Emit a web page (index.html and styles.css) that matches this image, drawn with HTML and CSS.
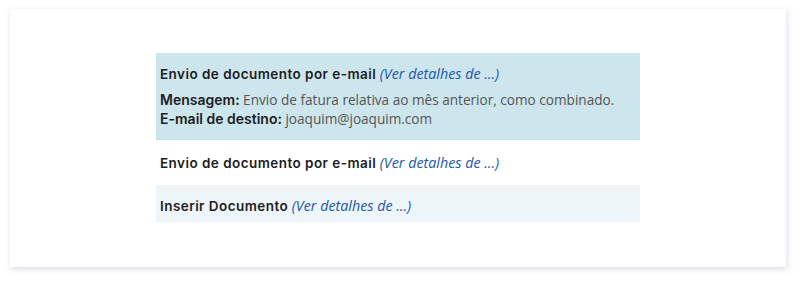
FILE: index.html
```html
<!DOCTYPE html>
<html lang="pt">
<head>
  <meta charset="UTF-8" />
  <title>Histórico de documentos</title>
  <link rel="stylesheet" href="styles.css">
</head>
<body>

  <div class="card">
    <ul class="history">
      <li class="entry entry-open">
        <div class="entry-title">
          <strong>Envio de documento por e-mail</strong>
          <a href="#">(Ver detalhes de ...)</a>
        </div>
        <div class="entry-details">
          <div><strong>Mensagem:</strong> Envio de fatura relativa ao mês anterior, como combinado.</div>
          <div><strong>E-mail de destino:</strong> joaquim@joaquim.com</div>
        </div>
      </li>
      <li class="entry entry-plain">
        <div class="entry-title">
          <strong>Envio de documento por e-mail</strong>
          <a href="#">(Ver detalhes de ...)</a>
        </div>
      </li>
      <li class="entry entry-alt">
        <div class="entry-title">
          <strong>Inserir Documento</strong>
          <a href="#">(Ver detalhes de ...)</a>
        </div>
      </li>
    </ul>
  </div>

</body>
</html>
```

FILE: styles.css
```css
body {
  font-family: "Open Sans", Arial, sans-serif;
  background: #fff;
  margin: 0;
  padding: 9px 14px 14px 10px;
  height: 281px;
  box-sizing: border-box;
}
.card {
  height: 100%;
  box-sizing: border-box;
  background: #fff;
  padding: 44px 20px 0;
  box-shadow: 1px 2px 6px rgba(150, 155, 185, 0.35);
}
.history {
  list-style-type: none;
  margin: 0 auto;
  padding: 0;
  width: 484px;
}
.entry {
  padding: 11px 4px 6px;
  font-size: 13.6px;
  color: #555;
}
.entry strong {
  font-family: Inter, "Open Sans", sans-serif;
  font-weight: 600;
  color: #1d1d1f;
}
.entry-title {
  line-height: 20px;
}
.entry-title strong {
  font-size: 13.5px;
  letter-spacing: 0.45px;
}
.entry-title a {
  font-family: "Open Sans", sans-serif;
  font-style: italic;
  font-size: 14.3px;
  color: #1c56aa;
  text-decoration: none;
}
.entry-details {
  margin: 6px 0 5px;
  line-height: 19px;
}
.entry-details strong {
  font-size: 14px;
}
.entry-open {
  background: #cde5ec;
  border-bottom: 1px solid #c2dee6;
}
.entry-plain {
  padding-top: 13px;
  padding-bottom: 12px;
}
.entry-alt {
  background: #edf5f8;
}
```
